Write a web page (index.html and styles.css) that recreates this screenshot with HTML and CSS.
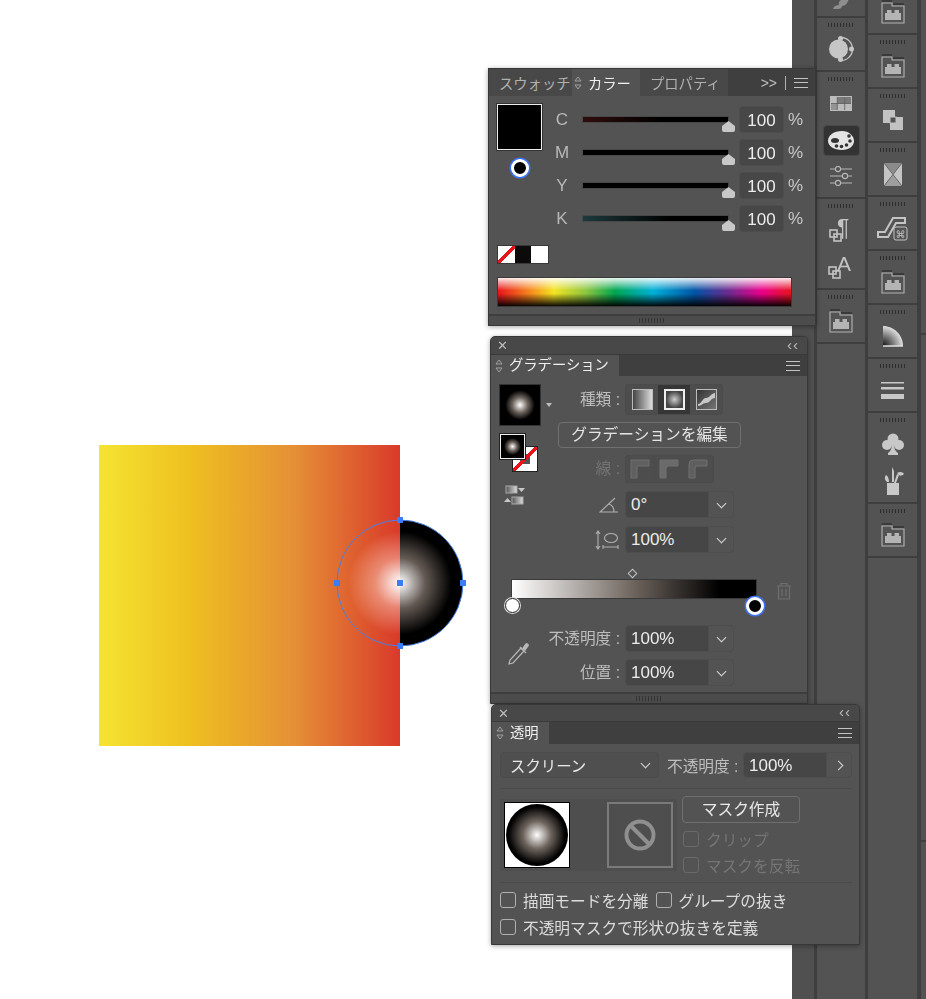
FILE: index.html
```html
<!DOCTYPE html>
<html lang="ja">
<head>
    <meta charset="UTF-8">
    <title>グラデーション</title>
    <link rel="stylesheet" href="styles.css">
</head>
<body>
    <svg class="defs" width="0" height="0">
        <defs>
            <symbol id="lib" viewBox="0 0 24 24">
                <path d="M1 3h10v3h12v17H1z" fill="none" stroke="#b4b4b4" stroke-width="1.1"/>
                <path d="M1 1h10M12 4h11" stroke="#222" stroke-width="1"/>
                <path d="M4 13h16v7H4zM6 10h4.500v3H6zM13.500 10H18v3h-4.500z" fill="#b4b4b4"/>
            </symbol>
            <symbol id="diamonds" viewBox="0 0 8 14">
                <path d="M4 1 7 5H1zM4 13 1 9h6z" fill="none" stroke="#a8a8a8" stroke-width=".9"/>
            </symbol>
            <radialGradient id="sphere">
                <stop offset="0" stop-color="#fff"/>
                <stop offset=".4" stop-color="#645a54"/>
                <stop offset=".82" stop-color="#000"/>
            </radialGradient>
            <linearGradient id="art" x1="0" x2="1" y1="0" y2="0">
                <stop offset="0" stop-color="#f5e431"/>
                <stop offset=".3" stop-color="#eec020"/>
                <stop offset=".65" stop-color="#e58f36"/>
                <stop offset="1" stop-color="#d93a2a"/>
            </linearGradient>
        </defs>
    </svg>

    <!-- artboard -->
    <svg class="artwork" width="400" height="301" viewBox="0 0 400 301">
        <defs>
            <clipPath id="leftHalf"><rect x="0" y="0" width="301" height="301"/></clipPath>
            <clipPath id="rightHalf"><rect x="301" y="0" width="99" height="301"/></clipPath>
        </defs>
        <rect x="0" y="0" width="301" height="301" fill="url(#art)"/>
        <g class="screen" clip-path="url(#leftHalf)"><circle cx="301" cy="138" r="63" fill="url(#sphere)"/></g>
        <g clip-path="url(#rightHalf)"><circle cx="301" cy="138" r="63" fill="url(#sphere)"/></g>
        <circle cx="301" cy="138" r="63" fill="none" stroke="#4a7fe6" stroke-width="1"/>
        <g fill="#3b7df5">
            <rect x="298" y="72" width="6" height="6"/>
            <rect x="298" y="198" width="6" height="6"/>
            <rect x="235" y="135" width="6" height="6"/>
            <rect x="361" y="135" width="6" height="6"/>
            <rect x="298" y="135" width="6" height="6"/>
        </g>
    </svg>

    <!-- right dock -->
    <div class="dock">
        <div class="dock-strip"></div>
        <div class="dock-col dock-col-a">
            <div class="cell">
                <i class="grip"></i>
                <div class="slot slot-clip"><svg width="18" height="12" viewBox="0 0 18 12"><path d="M1 12c1-3 3-4 6-4-1-2 1-5 4-6l7-2-3 6c-1 2-3 3-5 3 0 2-2 3-4 3z" fill="#8e8e8e"/></svg></div>
            </div>
            <div class="cell">
                <i class="grip"></i>
                <div class="slot">
                    <svg width="26" height="26" viewBox="0 0 26 26"><circle cx="10.500" cy="13" r="9.500" fill="#c6c6c6"/><path d="M13 1.500a11.500 11.500 0 0 1 0 23" fill="none" stroke="#c6c6c6" stroke-width="1.300"/><g fill="#c6c6c6"><circle cx="12.500" cy="2.500" r="2.500"/><circle cx="12.500" cy="23.500" r="2.500"/><circle cx="23.500" cy="13" r="2.500"/></g></svg>
                </div>
            </div>
            <div class="cell">
                <i class="grip"></i>
                <div class="slot">
                    <svg width="22" height="15" viewBox="0 0 22 15"><rect width="22" height="15" fill="#bcbcbc"/><rect x="7.300" y="1" width="7.400" height="6.500" fill="#7a7a7a"/><rect x="14.700" y="1" width="6.300" height="6.500" fill="#7a7a7a"/><rect x="1" y="7.500" width="6.300" height="6.500" fill="#949494"/><path d="M1 7.500h20M7.300 1v13M14.700 1v13" stroke="#5c5c5c" stroke-width=".8"/></svg>
                </div>
                <div class="slot slot-on">
                    <svg width="26" height="19" viewBox="0 0 26 19"><path d="M14 0C6 0 0 4 0 10c0 5 6 9 14 9 7 0 12-4 12-9S21 0 14 0z" fill="#e4e4e4"/><ellipse cx="7" cy="9.500" rx="4" ry="2.500" fill="#333"/><g fill="#333"><circle cx="21" cy="5" r="1.800"/><circle cx="22" cy="10" r="1.800"/><circle cx="18.500" cy="14" r="1.800"/><circle cx="13.500" cy="15.500" r="1.800"/><circle cx="8.500" cy="15" r="1.800"/></g></svg>
                </div>
                <div class="slot">
                    <svg width="22" height="20" viewBox="0 0 22 20" fill="none" stroke="#b8b8b8" stroke-width="1.100"><path d="M0 3h5M11 3h11M0 10h12M18 10h4M0 17h5M11 17h11"/><circle cx="8" cy="3" r="2.600"/><circle cx="15" cy="10" r="2.600"/><circle cx="8" cy="17" r="2.600"/></svg>
                </div>
            </div>
            <div class="cell">
                <i class="grip"></i>
                <div class="slot">
                    <svg class="glyph-icon" width="24" height="26" viewBox="0 0 24 26"><text x="8" y="19" class="icon-text" font-size="23">¶</text><g fill="none" stroke="#c4c4c4" stroke-width="1.600"><rect x="1" y="13" width="7" height="7"/><rect x="5" y="17" width="7" height="7"/></g></svg>
                </div>
                <div class="slot">
                    <svg class="glyph-icon" width="26" height="27" viewBox="0 0 26 27"><text x="9" y="18" class="icon-text" font-size="21">A</text><g fill="none" stroke="#c4c4c4" stroke-width="1.600"><rect x="1" y="14" width="7" height="7"/><rect x="5" y="18" width="7" height="7"/></g></svg>
                </div>
            </div>
            <div class="cell">
                <i class="grip"></i>
                <div class="slot"><svg class="lib"><use href="#lib"/></svg></div>
            </div>
            <div class="cell cell-empty"></div>
        </div>
        <div class="dock-col dock-col-b">
            <div class="cell">
                <i class="grip"></i>
                <div class="slot"><svg class="lib"><use href="#lib"/></svg></div>
            </div>
            <div class="cell">
                <i class="grip"></i>
                <div class="slot"><svg class="lib"><use href="#lib"/></svg></div>
            </div>
            <div class="cell">
                <i class="grip"></i>
                <div class="slot">
                    <svg width="20" height="20" viewBox="0 0 20 20"><path d="M0 0h12v7h8v13H7v-7H0z" fill="#c2c2c2"/><rect x="7" y="7" width="6" height="6" fill="#535353" stroke="#c2c2c2" stroke-width="1"/></svg>
                </div>
            </div>
            <div class="cell">
                <i class="grip"></i>
                <div class="slot">
                    <svg width="18" height="23" viewBox="0 0 18 23"><rect width="18" height="23" fill="#c4c4c4"/><path d="M0 0h18L9 11z" fill="#8b8b8b"/><path d="M0 23h18L9 12z" fill="#9e9e9e"/><path d="M0 0l18 23M18 0 0 23" stroke="#535353" stroke-width=".8"/></svg>
                </div>
            </div>
            <div class="cell">
                <i class="grip"></i>
                <div class="slot">
                    <svg width="31" height="25" viewBox="0 0 31 25"><path d="M1 16h7L16 2h12v5H19l-8 14H1z" fill="none" stroke="#c4c4c4" stroke-width="2"/><rect x="17" y="11" width="13" height="13" rx="2" fill="#535353" stroke="#c4c4c4" stroke-width="1"/><text x="23.500" y="22" class="cmd-text">⌘</text></svg>
                </div>
            </div>
            <div class="cell">
                <i class="grip"></i>
                <div class="slot"><svg class="lib"><use href="#lib"/></svg></div>
            </div>
            <div class="cell">
                <i class="grip"></i>
                <div class="slot">
                    <svg width="22" height="22" viewBox="0 0 22 22"><defs><radialGradient id="quarter" gradientUnits="userSpaceOnUse" cx="1" cy="21" r="20"><stop offset="0" stop-color="#111"/><stop offset=".5" stop-color="#777"/><stop offset="1" stop-color="#e0e0e0"/></radialGradient></defs><path d="M1 1c11 0 20 9 20 20H1z" fill="url(#quarter)"/><path d="M1 21h20" stroke="#e0e0e0" stroke-width="1.500"/></svg>
                </div>
            </div>
            <div class="cell">
                <i class="grip"></i>
                <div class="slot">
                    <svg width="23" height="17" viewBox="0 0 23 17" fill="#c8c8c8"><rect width="23" height="1.500"/><rect y="5" width="23" height="2.500"/><rect y="12" width="23" height="5"/></svg>
                </div>
            </div>
            <div class="cell">
                <i class="grip"></i>
                <div class="slot">
                    <svg width="22" height="23" viewBox="0 0 22 23" fill="#c8c8c8"><circle cx="11" cy="6" r="5.500"/><circle cx="5" cy="12" r="5"/><circle cx="17" cy="12" r="5"/><path d="M10 10h2c0 5 1 8 4 10v2H6v-2c3-2 4-5 4-10z"/></svg>
                </div>
                <div class="slot">
                    <svg width="22" height="28" viewBox="0 0 22 28" fill="#c8c8c8"><path d="M5 16h12v12H5zM4 8c2 1 3 4 3 7H5C3 13 2 11 4 8zM10 0l2 4v11h-2zM15 7l2 1-3 8h-2zM15 6c3-2 6-1 7 1-2 2-4 2-5 1z"/></svg>
                </div>
            </div>
            <div class="cell">
                <i class="grip"></i>
                <div class="slot"><svg class="lib"><use href="#lib"/></svg></div>
            </div>
            <div class="cell cell-empty"></div>
        </div>
        <div class="dock-col dock-col-c">
            <div class="cell-c cell-c-top"></div>
            <div class="cell-c cell-c-mid"></div>
            <div class="cell-c cell-c-end"></div>
        </div>
    </div>

    <!-- カラー -->
    <section class="panel panel-color">
        <div class="tabs">
            <span class="tab tab-swatch">スウォッチ</span>
            <span class="tab tab-active tab-color"><svg class="updown"><use href="#diamonds"/></svg>カラー</span>
            <span class="tab tab-prop">プロパティ</span>
            <span class="tabs-tools">
                <span class="more">&gt;&gt;</span><i class="bar"></i><span class="burger"></span>
            </span>
        </div>
        <div class="color-body">
            <div class="color-top">
                <div class="color-left">
                    <div class="big-swatch"></div>
                    <div class="ring"></div>
                </div>
                <div class="sliders">
                    <div class="slider-row"><span class="letter">C</span><div class="track track-c"><i class="thumb"></i></div><span class="num">100</span><span class="pct">%</span></div>
                    <div class="slider-row"><span class="letter">M</span><div class="track"><i class="thumb"></i></div><span class="num">100</span><span class="pct">%</span></div>
                    <div class="slider-row"><span class="letter">Y</span><div class="track"><i class="thumb"></i></div><span class="num">100</span><span class="pct">%</span></div>
                    <div class="slider-row"><span class="letter">K</span><div class="track track-k"><i class="thumb"></i></div><span class="num">100</span><span class="pct">%</span></div>
                </div>
            </div>
            <div class="mini-swatches">
                <i class="mini mini-none"></i><i class="mini mini-black"></i><i class="mini mini-white"></i>
            </div>
            <div class="spectrum"></div>
        </div>
        <div class="panel-foot"><i class="grip"></i></div>
    </section>

    <!-- グラデーション -->
    <section class="panel panel-grad">
        <div class="titlebar"><span class="close">✕</span><span class="collapse">‹‹</span></div>
        <div class="tabs tabs-single">
            <span class="tab tab-active tab-grad"><svg class="updown"><use href="#diamonds"/></svg>グラデーション</span>
            <span class="tabs-tools"><span class="burger"></span></span>
        </div>
        <div class="grad-body">
            <div class="grad-main">
                <div class="grad-tools">
                    <div class="thumb-row">
                        <div class="grad-thumb"></div>
                        <i class="caret"></i>
                    </div>
                    <div class="fill-stroke">
                        <div class="fs-stroke"></div>
                        <div class="fs-fill"></div>
                    </div>
                    <svg class="swap" width="22" height="20" viewBox="0 0 22 20">
                        <defs><linearGradient id="swapG"><stop offset="0" stop-color="#555"/><stop offset="1" stop-color="#ddd"/></linearGradient></defs>
                        <rect x="2" y="1" width="11" height="7" fill="url(#swapG)" stroke="#aaa"/>
                        <path d="M14 3h7l-3.500 4z" fill="#c8c8c8"/>
                        <rect x="8" y="12" width="11" height="7" fill="url(#swapG)" stroke="#aaa"/>
                        <path d="M0 17h7l-3.500-4z" fill="#c8c8c8"/>
                    </svg>
                </div>
                <div class="grad-rows">
                    <div class="row row-type">
                        <span class="label">種類 :</span>
                        <div class="btn-group">
                            <span class="type-btn"><i class="type-icon type-linear"></i></span>
                            <span class="type-btn type-btn-on"><i class="type-icon type-radial"></i></span>
                            <span class="type-btn">
                                <svg class="type-free" width="21" height="21" viewBox="0 0 21 21"><defs><linearGradient id="freeG" x1="0" y1="0" x2="1" y2="1"><stop offset="0" stop-color="#333"/><stop offset="1" stop-color="#777"/></linearGradient></defs><rect x=".5" y=".5" width="20" height="20" fill="url(#freeG)" stroke="#bbb"/><path d="M2 15c4 0 4-6 8-6s4-4 9-5v5c-4 0-5 5-9 5s-4 3-8 3z" fill="#c8c8c8"/></svg>
                            </span>
                        </div>
                    </div>
                    <div class="edit-btn">グラデーションを編集</div>
                    <div class="row row-line">
                        <span class="label label-dim">線 :</span>
                        <div class="btn-group btn-group-dim">
                            <span class="join-btn"><svg width="20" height="20" viewBox="0 0 20 20"><path d="M1 19V1h18v6H7v12z" fill="#606060" stroke="#6e6e6e" stroke-linejoin="miter"/></svg></span>
                            <span class="join-btn"><svg width="20" height="20" viewBox="0 0 20 20"><path d="M1 19V1h18v6H9l-2 2v10z" fill="#6b6b6b" stroke="#707070" stroke-linejoin="miter"/></svg></span>
                            <span class="join-btn"><svg width="20" height="20" viewBox="0 0 20 20"><path d="M1 19V5q0-4 4-4h14v6H9q-2 0-2 2v10z" fill="#5f5f5f" stroke="#707070"/></svg></span>
                        </div>
                    </div>
                    <div class="row">
                        <span class="label label-icon"><svg width="20" height="16" viewBox="0 0 20 16" fill="none" stroke="#b0b0b0" stroke-width="1.100"><path d="M16 1 1 15h18M10 7c3 1 5 4 5 8"/></svg></span>
                        <div class="combo"><span class="combo-val">0°</span><span class="combo-btn"><i class="chev"></i></span></div>
                    </div>
                    <div class="row">
                        <span class="label label-icon"><svg width="24" height="20" viewBox="0 0 24 20" fill="none" stroke="#b0b0b0" stroke-width="1.100"><path d="M3 2v16M1 4l2-3 2 3M1 16l2 3 2-3"/><ellipse cx="16" cy="8" rx="6.500" ry="4.500"/><path d="M8 17h15M8 15v4M23 15v4"/></svg></span>
                        <div class="combo"><span class="combo-val">100%</span><span class="combo-btn"><i class="chev"></i></span></div>
                    </div>
                </div>
            </div>
            <div class="grad-bar-row">
                <div class="grad-bar">
                    <i class="mid-point"></i>
                    <i class="stop stop-white"></i>
                    <i class="ring ring-stop"></i>
                </div>
                <svg class="trash" width="16" height="18" viewBox="0 0 16 18" fill="none" stroke="#6f6f6f" stroke-width="1.200"><path d="M1 4h14M5 4V1.500h6V4M2.500 4v13h11V4M6 7v7M10 7v7"/></svg>
            </div>
            <div class="grad-stops">
                <svg class="dropper" width="24" height="24" viewBox="0 0 24 24" fill="none" stroke="#b8b8b8" stroke-width="1.200"><path d="M14 6 3 18l-1 4 4-1L17 9z"/><path d="M13 5l6 6M16 6l3-4c1-1 3 1 2 2l-3 4z" fill="#b8b8b8"/></svg>
                <div class="stop-rows">
                    <div class="row row-wide">
                        <span class="label">不透明度 :</span>
                        <div class="combo"><span class="combo-val">100%</span><span class="combo-btn"><i class="chev"></i></span></div>
                    </div>
                    <div class="row row-wide">
                        <span class="label">位置 :</span>
                        <div class="combo"><span class="combo-val">100%</span><span class="combo-btn"><i class="chev"></i></span></div>
                    </div>
                </div>
            </div>
        </div>
        <div class="panel-foot"><i class="grip"></i></div>
    </section>

    <!-- 透明 -->
    <section class="panel panel-trans">
        <div class="titlebar"><span class="close">✕</span><span class="collapse">‹‹</span></div>
        <div class="tabs tabs-single">
            <span class="tab tab-active tab-trans"><svg class="updown"><use href="#diamonds"/></svg>透明</span>
            <span class="tabs-tools"><span class="burger"></span></span>
        </div>
        <div class="trans-body">
            <div class="trans-top">
                <div class="blend"><span>スクリーン</span><i class="chev"></i></div>
                <span class="label-plain">不透明度 :</span>
                <div class="combo combo-opacity"><span class="combo-val">100%</span><span class="combo-btn"><i class="chev chev-right"></i></span></div>
            </div>
            <div class="trans-mid">
                <div class="thumbs">
                    <div class="art-thumb"><i class="art-ball"></i></div>
                    <div class="mask-thumb">
                        <svg width="32" height="32" viewBox="0 0 32 32" fill="none" stroke="#8f8f8f" stroke-width="4"><circle cx="16" cy="16" r="13.500"/><path d="M7 7l18 18"/></svg>
                    </div>
                </div>
                <div class="mask-side">
                    <div class="mask-btn">マスク作成</div>
                    <label class="check check-dim"><i class="box"></i>クリップ</label>
                    <label class="check check-dim"><i class="box"></i>マスクを反転</label>
                </div>
            </div>
            <div class="trans-checks">
                <div class="check-row">
                    <label class="check"><i class="box"></i>描画モードを分離</label>
                    <label class="check"><i class="box"></i>グループの抜き</label>
                </div>
                <label class="check"><i class="box"></i>不透明マスクで形状の抜きを定義</label>
            </div>
        </div>
    </section>
</body>
</html>
```

FILE: styles.css
```css
*{
    box-sizing: border-box;
}
html,body{
    margin: 0;
    height: 999px;
    overflow: hidden;
    background-color: white;
}
body{
    position: relative;
    font-family: "Liberation Sans", "Noto Sans CJK JP", sans-serif;
    color: #d8d8d8;
}
i{
    display: block;
}
.defs{
    position: absolute;
}

/* artboard */
.artwork{
    position: absolute;
    left: 99px;
    top: 445px;
    overflow: visible;
}
.screen{
    mix-blend-mode: screen;
}

/* dock */
.dock{
    position: absolute;
    left: 792px;
    top: 0;
    right: 0;
    height: 999px;
    display: flex;
    gap: 3px;
    background-color: #3e3e3e;
}
.dock-strip{
    width: 22px;
    background-color: #505050;
}
.dock-col{
    width: 49px;
    display: flex;
    flex-direction: column;
    gap: 2px;
}
.dock-col-a{
    margin-top: -36px;
}
.dock-col-b{
    margin-top: -19px;
}
.dock-col-c{
    width: 5px;
    margin-left: 1px;
    display: flex;
    flex-direction: column;
    gap: 2px;
}
.cell-c{
    background-color: #535353;
}
.cell-c-top{
    height: 333px;
}
.cell-c-mid{
    height: 505px;
}
.cell-c-end{
    flex: 1;
}
.cell{
    background-color: #535353;
    padding: 5px 0 2.5px;
    display: flex;
    flex-direction: column;
    align-items: center;
}
.cell-empty{
    flex: 1;
}
.grip{
    width: 26px;
    height: 4px;
    margin-bottom: 4px;
    background: repeating-linear-gradient(90deg, #2e2e2e 0 1px, #535353 1px 3px);
}
.slot{
    width: 100%;
    height: 36.5px;
    display: flex;
    align-items: center;
    justify-content: center;
}
.slot-clip{
    align-items: flex-end;
    padding-bottom: 4.5px;
}
.slot-on{
    width: 37px;
    height: 31px;
    margin: 3px 0 2.5px;
    background-color: #333;
    border: 1px solid #484848;
    border-radius: 4px;
}
.lib{
    width: 24px;
    height: 24px;
}
.glyph-icon{
    overflow: visible;
}
.icon-text{
    font-family: "Liberation Sans", sans-serif;
    fill: #c4c4c4;
}
.cmd-text{
    font-family: "DejaVu Sans", sans-serif;
    font-size: 10px;
    text-anchor: middle;
    fill: #c4c4c4;
}

/* panels */
.panel{
    position: absolute;
    display: flex;
    flex-direction: column;
    background-color: #535353;
    border: 1px solid #383838;
    box-shadow: 0 1px 5px rgba(0,0,0,0.35);
}
.panel-color{
    left: 488px;
    top: 68px;
    width: 328px;
    height: 258px;
}
.panel-grad{
    left: 490px;
    top: 336px;
    width: 318px;
    height: 368px;
    border-radius: 5px 5px 0 0;
}
.panel-trans{
    left: 491px;
    top: 704px;
    width: 369px;
    height: 241px;
    border-radius: 5px 5px 0 0;
}
.titlebar{
    height: 18px;
    flex: none;
    display: flex;
    justify-content: space-between;
    align-items: center;
    padding: 0 8px 0 6px;
    background-color: #484848;
    border-bottom: 1px solid #3a3a3a;
    border-radius: 5px 5px 0 0;
    color: #bdbdbd;
    font-size: 12px;
    line-height: 1;
}
.panel-trans .titlebar{
    height: 17px;
}
.close{
    font-size: 13px;
}
.collapse{
    font-size: 15px;
    letter-spacing: 1px;
    margin-top: -3px;
}
.tabs{
    height: 27px;
    flex: none;
    display: flex;
    align-items: stretch;
    background-color: #3f3f3f;
    font-size: 14.300px;
    color: #b0b0b0;
}
.tabs-single{
    height: 21px;
    line-height: 1;
}
.panel-trans .tabs-single{
    height: 22px;
}
.tab{
    display: flex;
    align-items: center;
    white-space: nowrap;
}
.tab-swatch{
    width: 83px;
    padding-left: 10px;
    background-color: #484848;
}
.tab-active{
    background-color: #535353;
    color: #f0f0f0;
}
.tab-color{
    width: 68px;
    padding-left: 2px;
    gap: 6px;
}
.tab-prop{
    width: 89px;
    padding-left: 10px;
    background-color: #484848;
    border-right: 1px solid #3f3f3f;
}
.tab-grad{
    width: 128px;
    padding-left: 4px;
    gap: 6px;
}
.tab-trans{
    width: 57px;
    padding-left: 4px;
    gap: 6px;
}
.updown{
    width: 8px;
    height: 14px;
    flex: none;
}
.tabs-tools{
    margin-left: auto;
    display: flex;
    align-items: center;
    gap: 8px;
    padding-right: 7px;
    font-size: 14px;
    color: #c0c0c0;
}
.bar{
    width: 1px;
    height: 14px;
    background-color: #b0b0b0;
}
.burger{
    width: 14px;
    height: 10px;
    border-top: 1px solid #c4c4c4;
    border-bottom: 1px solid #c4c4c4;
    background: linear-gradient(#c4c4c4,#c4c4c4) center/100% 1px no-repeat;
}
.panel-foot{
    margin-top: auto;
    height: 11px;
    flex: none;
    border-top: 2px solid #3e3e3e;
    background-color: #4c4c4c;
    display: flex;
    justify-content: center;
    align-items: center;
}
.panel-foot .grip{
    margin: 0;
    height: 5px;
    background: repeating-linear-gradient(90deg, #333 0 1px, #4c4c4c 1px 3px);
}

/* color panel */
.color-body{
    padding: 8px 0 0 8px;
}
.color-top{
    display: flex;
}
.color-left{
    width: 45px;
    display: flex;
    flex-direction: column;
    align-items: center;
    gap: 8px;
}
.big-swatch{
    width: 45px;
    height: 46px;
    background-color: black;
    border: 1px solid #eee;
    outline: 1px solid #333;
}
.ring{
    width: 18px;
    height: 18px;
    margin-top: 1px;
    border-radius: 50%;
    background-color: black;
    border: 3px solid white;
    box-shadow: 0 0 0 1.500px #3f74f0;
}
.sliders{
    padding: 2px 0 0 10px;
    display: flex;
    flex-direction: column;
    gap: 6px;
}
.slider-row{
    height: 27px;
    display: flex;
    align-items: center;
}
.letter{
    width: 20px;
    text-align: center;
    font-size: 17px;
    color: #b8b8b8;
}
.track{
    position: relative;
    width: 147px;
    height: 7px;
    margin: 0 10px 0 10px;
    background-color: black;
    border: 1px solid #484848;
}
.track-c{
    background: linear-gradient(90deg,#300d0d,#000 55%);
}
.track-k{
    background: linear-gradient(90deg,#1d3a3d,#000 60%);
}
.thumb{
    position: absolute;
    right: -7px;
    top: 4px;
    width: 13px;
    height: 11px;
    background-color: #c8c8c8;
    clip-path: polygon(50% 0, 100% 45%, 100% 100%, 0 100%, 0 45%);
    border-radius: 2px;
}
.num{
    width: 45px;
    height: 27px;
    line-height: 27px;
    text-align: center;
    font-size: 17px;
    color: #ececec;
    background-color: #474747;
    border: 1px solid #4d4d4d;
    border-radius: 4px;
}
.pct{
    margin-left: 4px;
    font-size: 17px;
    color: #c8c8c8;
}
.mini-swatches{
    display: flex;
    width: 52px;
    margin-top: 13px;
    border: 1px solid #383838;
}
.mini{
    flex: 1;
    height: 17px;
}
.mini-none{
    background-image: linear-gradient(to top left, white 44%, #e8141c 44% 56%, white 56%);
}
.mini-black{
    background-color: #0c0a0a;
}
.mini-white{
    background-color: white;
}
.spectrum{
    width: 295px;
    height: 30px;
    margin-top: 13px;
    border: 1px solid #3a3a3a;
    background:
        linear-gradient(rgba(255,255,255,0.9), rgba(255,255,255,0) 45%, rgba(0,0,0,0) 55%, rgba(0,0,0,0.95)),
        linear-gradient(90deg, #e8141c, #f7941d 12%, #f4e422 19%, #8dc63f 30%, #00a651 40%, #00b0d8 53%, #0054a6 67%, #662d91 78%, #ec008c 90%, #e8141c);
}

/* gradient panel */
.grad-body{
    padding: 8px 0 0 8px;
}
.grad-main{
    display: flex;
}
.grad-tools{
    width: 59px;
    flex: none;
}
.thumb-row{
    display: flex;
    align-items: center;
    gap: 5px;
}
.grad-thumb{
    width: 42px;
    height: 42px;
    border: 1px solid #333;
    background: radial-gradient(circle closest-side, #fff, #6e645d 38%, #000 74%);
}
.caret{
    width: 0;
    height: 0;
    border: 3.500px solid transparent;
    border-top: 4px solid #bdbdbd;
    border-bottom: none;
}
.fill-stroke{
    position: relative;
    width: 38px;
    height: 38px;
    margin: 8px 0 0 1px;
}
.fs-fill{
    position: absolute;
    left: 0;
    top: 0;
    width: 25px;
    height: 25px;
    border: 1px solid #eee;
    outline: 1px solid #222;
    background: radial-gradient(circle closest-side, #fff, #6e645d 38%, #000 74%);
}
.fs-stroke{
    position: absolute;
    right: 0;
    bottom: 0;
    width: 26px;
    height: 26px;
    border: 1px solid #222;
    background:
        linear-gradient(to top left, transparent 44%, #e8141c 44% 56%, transparent 56%),
        linear-gradient(#535353,#535353) center/10px 10px no-repeat,
        white;
}
.swap{
    display: block;
    margin: 13px 0 0 5px;
}
.grad-rows{
    display: flex;
    flex-direction: column;
    gap: 8px;
}
.row{
    display: flex;
    align-items: center;
    gap: 5px;
}
.label{
    width: 62px;
    text-align: right;
    font-size: 15.700px;
    line-height: 1;
    color: #bdbdbd;
    white-space: nowrap;
}
.label-dim{
    color: #737373;
}
.label-icon{
    display: flex;
    justify-content: flex-end;
    padding-right: 1px;
}
.btn-group{
    display: flex;
    height: 31px;
    border: 1px solid #4b4b4b;
    border-radius: 3px;
    background-color: #4d4d4d;
}
.btn-group-dim{
    height: 28px;
}
.type-btn{
    width: 32px;
    display: flex;
    align-items: center;
    justify-content: center;
}
.type-btn-on{
    background-color: #363636;
}
.type-icon{
    width: 21px;
    height: 21px;
    border: 1px solid #bbb;
}
.type-linear{
    background: linear-gradient(90deg,#444,#ddd);
}
.type-radial{
    border: 2px solid #eee;
    background: radial-gradient(circle closest-side,#ccc,#444);
}
.join-btn{
    width: 29px;
    display: flex;
    align-items: center;
    justify-content: center;
    border-right: 1px solid #4b4b4b;
}
.edit-btn{
    width: 183px;
    height: 26px;
    margin: -1px 0;
    text-align: center;
    font-size: 15.700px;
    line-height: 24px;
    color: #e4e4e4;
    border: 1px solid #6f6f6f;
    border-radius: 4px;
}
.combo{
    width: 109px;
    height: 27px;
    display: flex;
    background-color: #464646;
    border: 1px solid #4e4e4e;
    border-radius: 4px;
    font-size: 17px;
    color: #ececec;
}
.combo-val{
    flex: 1;
    padding-left: 5px;
    line-height: 25px;
}
.combo-btn{
    width: 25px;
    display: flex;
    align-items: center;
    justify-content: center;
    background-color: #535353;
    border-left: 1px solid #4e4e4e;
    border-radius: 0 3px 3px 0;
}
.chev{
    width: 7px;
    height: 7px;
    margin-top: -3px;
    border-right: 1.400px solid #d8d8d8;
    border-bottom: 1.400px solid #d8d8d8;
    transform: rotate(45deg);
}
.chev-right{
    margin: 0 2px 0 0;
    transform: rotate(-45deg);
}
.grad-bar-row{
    display: flex;
    align-items: flex-start;
    gap: 19px;
    margin: 26px 0 0 12px;
}
.grad-bar{
    position: relative;
    width: 246px;
    height: 20px;
    border: 1px solid #3a3a3a;
    background: linear-gradient(90deg,#fff,#6e645d 50%,#000 85%);
}
.mid-point{
    position: absolute;
    left: 117px;
    top: -10px;
    width: 7px;
    height: 7px;
    border: 1px solid #c4c4c4;
    transform: rotate(45deg);
}
.stop{
    position: absolute;
}
.stop-white{
    left: -7px;
    top: 18px;
    width: 15px;
    height: 15px;
    border-radius: 50%;
    background-color: white;
    border: 1.500px solid #222;
    box-shadow: 0 0 0 1px #ddd;
}
.ring-stop{
    position: absolute;
    right: -8px;
    top: 17px;
    margin: 0;
}
.trash{
    display: block;
    margin-top: 3px;
}
.grad-stops{
    display: flex;
    align-items: flex-end;
    margin-top: 25px;
}
.dropper{
    display: block;
    margin: 0 17px 20px 8px;
}
.stop-rows{
    display: flex;
    flex-direction: column;
    gap: 7px;
}
.row-wide .label{
    width: 72px;
}

/* transparency panel */
.trans-body{
    padding: 8px 7px 0 8px;
    font-size: 15.700px;
}
.trans-top{
    display: flex;
    align-items: center;
    padding-bottom: 10px;
    border-bottom: 1px solid #4a4a4a;
}
.blend{
    width: 159px;
    height: 26px;
    display: flex;
    justify-content: space-between;
    align-items: center;
    padding: 0 9px;
    border: 1px solid #4c4c4c;
    border-radius: 4px;
    background-color: #4f4f4f;
    color: #e8e8e8;
    font-size: 15.400px;
}
.label-plain{
    margin-left: 8px;
    width: 76px;
    color: #bdbdbd;
    white-space: nowrap;
}
.combo-opacity{
    height: 26px;
}
.trans-mid{
    display: flex;
    gap: 5px;
    padding: 7px 0 9px;
    border-bottom: 1px solid #4a4a4a;
}
.thumbs{
    width: 177px;
    height: 72px;
    margin-top: 3px;
    display: flex;
    justify-content: space-between;
    align-items: center;
    padding: 0 4px;
    background-color: #4e4e4e;
    border-radius: 3px;
}
.art-thumb{
    width: 66px;
    height: 66px;
    background-color: white;
    border: 1px solid black;
    display: flex;
    align-items: center;
    justify-content: center;
}
.art-ball{
    width: 62px;
    height: 62px;
    border-radius: 50%;
    background: radial-gradient(circle closest-side, #fff, #6e645d 45%, #000 92%);
}
.mask-thumb{
    width: 66px;
    height: 66px;
    border: 2px solid #7a7a7a;
    display: flex;
    align-items: center;
    justify-content: center;
}
.mask-side{
    display: flex;
    flex-direction: column;
    gap: 10px;
}
.mask-btn{
    width: 118px;
    height: 27px;
    margin-bottom: -2px;
    text-align: center;
    font-size: 15.700px;
    line-height: 25px;
    color: #e8e8e8;
    border: 1px solid #6f6f6f;
    border-radius: 4px;
}
.check{
    display: flex;
    align-items: center;
    gap: 7px;
    height: 16px;
    font-size: 15.700px;
    color: #dcdcdc;
    white-space: nowrap;
}
.check-dim{
    color: #757575;
    margin-left: 1px;
}
.box{
    width: 16px;
    height: 16px;
    flex: none;
    border: 1.500px solid #b0b0b0;
    border-radius: 3px;
}
.check-dim .box{
    border-color: #6b6b6b;
}
.trans-checks{
    display: flex;
    flex-direction: column;
    gap: 11px;
    padding-top: 9px;
}
.check-row{
    display: flex;
    gap: 7px;
}
```
